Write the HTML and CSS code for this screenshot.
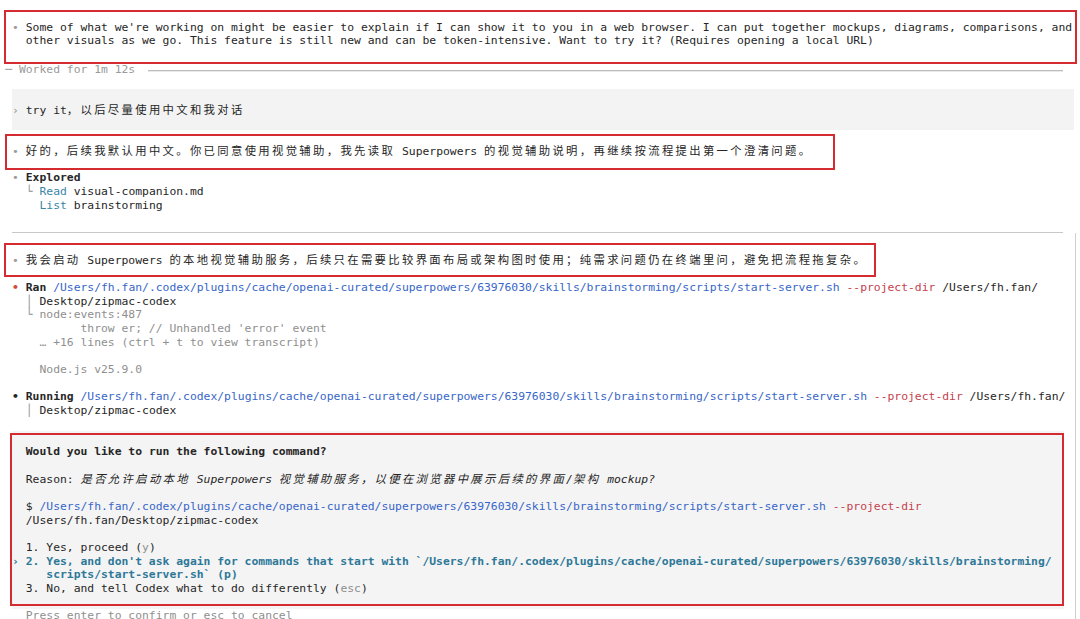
FILE: index.html
```html
<!DOCTYPE html>
<html lang="zh-CN">
<head>
<meta charset="utf-8">
<title>Codex terminal</title>
<link rel="stylesheet" href="styles.css">
</head>
<body>
<div class="page">
  <div class="term">
    <div class="ln"><span class="dot">•</span> Some of what we're working on might be easier to explain if I can show it to you in a web browser. I can put together mockups, diagrams, comparisons, and</div>
    <div class="ln">  other visuals as we go. This feature is still new and can be token-intensive. Want to try it? (Requires opening a local URL)</div>
    <div class="ln"> </div>
    <div class="ln worked"><span class="wtxt">─ Worked for 1m 12s </span><span class="wline"></span></div>
    <div class="ln"> </div>
    <div class="user">
      <div class="ln"> </div>
      <div class="ln"><span class="g">›</span> try it<span class="c">，以后尽量使用中文和我对话</span></div>
      <div class="ln"> </div>
    </div>
    <div class="ln"> </div>
    <div class="ln"><span class="dot">•</span> <span class="c">好的，后续我默认用中文。你已同意使用视觉辅助，我先读取</span> Superpowers <span class="c">的视觉辅助说明，再继续按流程提出第一个澄清问题。</span></div>
    <div class="ln"> </div>
    <div class="ln"><span class="dot">•</span> <span class="b">Explored</span></div>
    <div class="ln">  <span class="g">└</span> <span class="teal">Read</span> visual-companion.md</div>
    <div class="ln">    <span class="teal">List</span> brainstorming</div>
    <div class="ln"> </div>
    <div class="ln rule"><span class="rline"></span></div>
    <div class="ln"> </div>
    <div class="ln"><span class="dot">•</span> <span class="c">我会启动</span> Superpowers <span class="c">的本地视觉辅助服务，后续只在需要比较界面布局或架构图时使用；纯需求问题仍在终端里问，避免把流程拖复杂。</span></div>
    <div class="ln"> </div>
    <div class="ln"><span class="dot red-dot">•</span> <span class="b">Ran</span> <span class="blue">/Users/fh.fan/.codex/plugins/cache/openai-curated/superpowers/63976030/skills/brainstorming/scripts/start-server.sh</span> <span class="red">--project-dir</span> /Users/fh.fan/</div>
    <div class="ln">  <span class="g">│</span> Desktop/zipmac-codex</div>
    <div class="ln g">  └ node:events:487</div>
    <div class="ln g">          throw er; // Unhandled 'error' event</div>
    <div class="ln g">    … +16 lines (ctrl + t to view transcript)</div>
    <div class="ln"> </div>
    <div class="ln g">    Node.js v25.9.0</div>
    <div class="ln"> </div>
    <div class="ln"><span class="b">•</span> <span class="b">Running</span> <span class="blue">/Users/fh.fan/.codex/plugins/cache/openai-curated/superpowers/63976030/skills/brainstorming/scripts/start-server.sh</span> <span class="red">--project-dir</span> /Users/fh.fan/</div>
    <div class="ln">  <span class="g">│</span> Desktop/zipmac-codex</div>
    <div class="ln"> </div>
    <div class="modal">
      <div class="ln"> </div>
      <div class="ln">  <span class="b">Would you like to run the following command?</span></div>
      <div class="ln"> </div>
      <div class="ln">  Reason: <span class="it"><span class="c">是否允许启动本地</span> Superpowers <span class="c">视觉辅助服务，以便在浏览器中展示后续的界面</span>/<span class="c">架构</span> mockup?</span></div>
      <div class="ln"> </div>
      <div class="ln">  $ <span class="blue">/Users/fh.fan/.codex/plugins/cache/openai-curated/superpowers/63976030/skills/brainstorming/scripts/start-server.sh</span> <span class="red">--project-dir</span></div>
      <div class="ln">  /Users/fh.fan/Desktop/zipmac-codex</div>
      <div class="ln"> </div>
      <div class="ln">  1. Yes, proceed (<span class="g">y</span>)</div>
      <div class="ln sel">› 2. Yes, and don't ask again for commands that start with `/Users/fh.fan/.codex/plugins/cache/openai-curated/superpowers/63976030/skills/brainstorming/</div>
      <div class="ln sel">     scripts/start-server.sh` (p)</div>
      <div class="ln">  3. No, and tell Codex what to do differently (<span class="g">esc</span>)</div>
      <div class="ln"> </div>
    </div>
    <div class="ln g">  Press enter to confirm or esc to cancel</div>
  </div>

  <div class="scroll"></div>
  <div class="mark m1"></div>
  <div class="mark m2"></div>
  <div class="mark m3"></div>
  <div class="mark m4"></div>
</div>
</body>
</html>
```

FILE: styles.css
```css
html, body {
  margin: 0;
  padding: 0;
  background: #ffffff;
}

body {
  font-family: "DejaVu Sans Mono", "Noto Sans CJK SC", monospace;
  font-size: 11.36px;
  color: #262626;
}

.page {
  position: relative;
  width: 1080px;
  height: 619px;
  overflow: hidden;
}

.term {
  padding: 20.8px 0 0 12.1px;
  width: 1062px;
}

.ln {
  height: 13.7px;
  line-height: 13.7px;
  white-space: pre;
}

.c {
  font-family: "Noto Sans CJK SC", sans-serif;
  letter-spacing: 2.32px;
}

.dot { color: #9b9b9b; }
.red-dot { color: #cf4a3c; font-weight: bold; }
.g { color: #8f8f8f; }
.b { font-weight: bold; }
.it { font-style: italic; }
.blue { color: #3766c8; }
.red { color: #c4414d; }
.teal { color: #3a86a6; }

.worked {
  display: flex;
  align-items: center;
  box-sizing: border-box;
  padding-top: 3px;
  margin-left: -6.84px;
  width: 1058px;
  color: #9a9a9a;
}

.wtxt { flex: none; }

.wline {
  flex: 1;
  height: 1px;
  margin-left: 6px;
  background: #bdbdbd;
  box-shadow: 0 1px 0 #e8e8e8;
}

.user {
  background: #f3f3f3;
  width: 1062px;
}

.rule {
  display: flex;
  align-items: center;
  width: 1051px;
}

.rline {
  flex: 1;
  height: 1px;
  background: #c8c8c8;
}

.modal {
  background: #f4f4f4;
  width: 1052px;
}

.sel {
  color: #2e7898;
  font-weight: bold;
}

.scroll {
  position: absolute;
  left: 1075px;
  top: 233px;
  width: 1px;
  height: 386px;
  background: #d0d0d0;
}

.mark {
  position: absolute;
  border: 2px solid #d62a31;
  box-sizing: border-box;
  pointer-events: none;
}

.m1 { left: 4px; top: 10px; width: 1073px; height: 54px; }
.m2 { left: 5px; top: 134px; width: 830px; height: 36px; }
.m3 { left: 4px; top: 243px; width: 872px; height: 34px; }
.m4 { left: 10px; top: 433px; width: 1054px; height: 173px; }
```
